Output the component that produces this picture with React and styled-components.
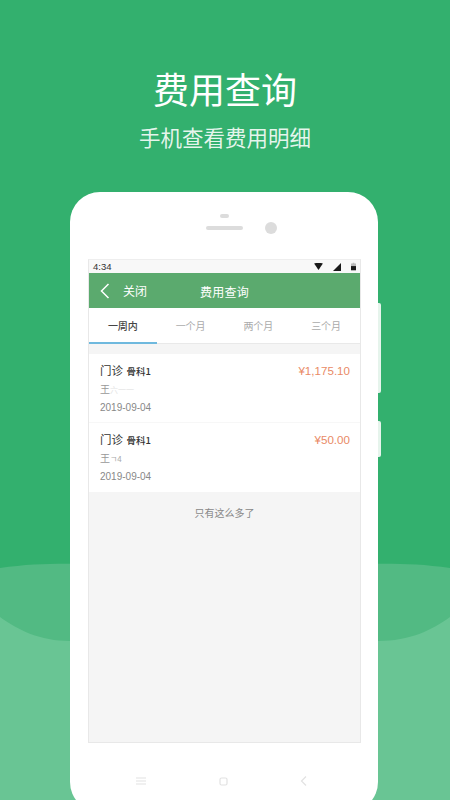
import React from "react";
import styled, { createGlobalStyle } from "styled-components";

const GlobalStyle = createGlobalStyle`
  html, body {
    margin: 0;
    padding: 0;
    background: #33b06e;
  }
  * {
    box-sizing: border-box;
  }
`;

const TABS = ["一周内", "一个月", "两个月", "三个月"];

const RECORDS = [
  { id: 1, amount: "¥1,175.10", name: "王", rest: "六一一", faint: true, date: "2019-09-04" },
  { id: 2, amount: "¥50.00", name: "王", rest: "ㄱ4", faint: false, date: "2019-09-04" },
];

const App = () => {
  return (
    <Page>
      <GlobalStyle />
      <Waves viewBox="0 0 450 240" preserveAspectRatio="none">
        <path
          d="M0 8 C 40 2 70 4 110 4 L340 4 C 380 4 410 2 450 8 L450 240 L0 240 Z"
          fill="#52ba83"
        />
        <path
          d="M0 57 C 18 70 40 81 70 81 L378 81 C 410 81 432 70 450 57 L450 240 L0 240 Z"
          fill="#69c594"
        />
      </Waves>
      <Title>费用查询</Title>
      <Subtitle>手机查看费用明细</Subtitle>
      <Phone>
        <SideKey $top={111} $height={90} />
        <SideKey $top={229} $height={36} />
        <Earpiece>
          <Sensor />
          <SpeakerRow>
            <Speaker />
            <Camera />
          </SpeakerRow>
        </Earpiece>
        <Screen>
          <StatusBar>
            <span>4:34</span>
            <StatusIcons>
              <svg width="9" height="7" viewBox="0 0 10 8">
                <path d="M0 0.5 Q5 -1 10 0.5 L5 8 Z" fill="#1a1a1a" />
              </svg>
              <svg width="8" height="8" viewBox="0 0 8 8">
                <path d="M8 0 L8 8 L0 8 Z" fill="#1a1a1a" />
              </svg>
              <svg width="5" height="9" viewBox="0 0 6 9">
                <path d="M2 0 H4 V1 H6 V9 H0 V1 H2 Z" fill="#bbb" />
                <path d="M0 4 H6 V9 H0 Z" fill="#1a1a1a" />
              </svg>
            </StatusIcons>
          </StatusBar>
          <AppBar>
            <BackLink>
              <svg width="10" height="16" viewBox="0 0 10 16" fill="none">
                <path d="M8.5 1 L1.5 8 L8.5 15" stroke="#fff" strokeWidth="1.5" />
              </svg>
              <span>关闭</span>
            </BackLink>
            <AppTitle>费用查询</AppTitle>
          </AppBar>
          <Tabs>
            {TABS.map((tab, i) => (
              <Tab key={tab} $active={i === 0}>
                {tab}
              </Tab>
            ))}
          </Tabs>
          <Records>
            {RECORDS.map((record) => (
              <Record key={record.id}>
                <RecordHead>
                  <RecordType>
                    门诊 <small>骨科1</small>
                  </RecordType>
                  <Amount>{record.amount}</Amount>
                </RecordHead>
                <Patient>
                  {record.name}
                  <PatientMasked $faint={record.faint}>{record.rest}</PatientMasked>
                </Patient>
                <RecordDate>{record.date}</RecordDate>
              </Record>
            ))}
          </Records>
          <EndNote>只有这么多了</EndNote>
        </Screen>
        <NavBar>
          <svg width="10" height="8" viewBox="0 0 10 8" stroke="#e2e2e2" strokeWidth="1.1">
            <path d="M0 1 H10 M0 4 H10 M0 7 H10" />
          </svg>
          <svg width="9" height="9" viewBox="0 0 9 9" fill="none" stroke="#e2e2e2" strokeWidth="1.2">
            <rect x="1" y="1" width="7" height="7" rx="1.5" />
          </svg>
          <svg width="7" height="10" viewBox="0 0 7 10" fill="none" stroke="#e2e2e2" strokeWidth="1.2">
            <path d="M6 0.5 L1.5 5 L6 9.5" />
          </svg>
        </NavBar>
      </Phone>
    </Page>
  );
};

const FONT = `"Noto Sans CJK SC", "Liberation Sans", sans-serif`;

const Page = styled.div`
  position: relative;
  width: 450px;
  height: 800px;
  overflow: hidden;
  display: flex;
  flex-direction: column;
  align-items: center;
  padding-top: 63px;
  background: #33b06e;
  font-family: ${FONT};
`;

const Waves = styled.svg`
  position: absolute;
  left: 0;
  top: 560px;
  width: 450px;
  height: 240px;
`;

const Title = styled.h1`
  position: relative;
  margin: 0;
  font-size: 36px;
  line-height: 50px;
  font-weight: 400;
  color: #fff;
`;

const Subtitle = styled.p`
  position: relative;
  margin: 9px 0 0;
  font-size: 21.5px;
  line-height: 30px;
  color: rgba(255, 255, 255, 0.88);
`;

const Phone = styled.div`
  position: relative;
  flex: none;
  width: 308px;
  height: 620px;
  margin: 40px 2px 0 0;
  padding: 0 17px 0 18px;
  border-radius: 30px;
  background: #fff;
`;

const SideKey = styled.div`
  position: absolute;
  right: -3px;
  top: ${(p) => p.$top}px;
  width: 3px;
  height: ${(p) => p.$height}px;
  border-radius: 0 2px 2px 0;
  background: #e6f4ec;
`;

const Earpiece = styled.div`
  height: 67px;
  padding-top: 22px;
  display: flex;
  flex-direction: column;
  align-items: center;
`;

const Sensor = styled.div`
  width: 9px;
  height: 4px;
  border-radius: 2px;
  background: #dcdcdc;
`;

const SpeakerRow = styled.div`
  position: relative;
  margin-top: 8px;
`;

const Speaker = styled.div`
  width: 37px;
  height: 4px;
  border-radius: 2px;
  background: #dcdcdc;
`;

const Camera = styled.div`
  position: absolute;
  left: 59px;
  top: -4px;
  width: 12px;
  height: 12px;
  border-radius: 50%;
  background: #dcdcdc;
`;

const Screen = styled.div`
  height: 484px;
  display: flex;
  flex-direction: column;
  border: 1px solid #e8e8e8;
  border-top-color: #eee;
  background: #f5f5f5;
`;

const StatusBar = styled.div`
  flex: none;
  height: 13px;
  padding: 0 4px 0 4px;
  display: flex;
  align-items: center;
  justify-content: space-between;
  background: #f8f8f8;
  font-family: "Liberation Sans", sans-serif;
  font-size: 9.5px;
  color: #333;
`;

const StatusIcons = styled.div`
  display: flex;
  align-items: center;
  gap: 10px;
`;

const AppBar = styled.div`
  position: relative;
  flex: none;
  height: 35px;
  display: flex;
  align-items: center;
  justify-content: center;
  background: #5baa6e;
  color: #fff;
  font-size: 12px;
`;

const BackLink = styled.div`
  position: absolute;
  left: 11px;
  top: 0;
  height: 100%;
  display: flex;
  align-items: center;
  gap: 13px;
`;

const AppTitle = styled.span`
  padding-top: 1px;
  letter-spacing: 0.2px;
`;

const Tabs = styled.div`
  flex: none;
  height: 36px;
  display: grid;
  grid-template-columns: repeat(4, 1fr);
  background: #fff;
  border-bottom: 1px solid #e9e9e9;
`;

const Tab = styled.div`
  display: flex;
  align-items: center;
  justify-content: center;
  margin-bottom: -1px;
  border-bottom: 2px solid ${(p) => (p.$active ? "#6fb9de" : "transparent")};
  font-size: 10px;
  font-weight: ${(p) => (p.$active ? 500 : 400)};
  color: ${(p) => (p.$active ? "#444" : "#aaa")};
`;

const Records = styled.div`
  flex: none;
  margin-top: 10px;
  background: #fff;
`;

const Record = styled.div`
  height: 69px;
  padding: 7px 10px 0 11px;
  &:not(:last-child) {
    border-bottom: 1px solid #f7f7f7;
  }
`;

const RecordHead = styled.div`
  display: flex;
  justify-content: space-between;
  align-items: center;
  height: 18px;
`;

const RecordType = styled.div`
  font-size: 11.5px;
  color: #333;

  small {
    margin-left: 1px;
    font-size: 9.5px;
    font-weight: 500;
  }
`;

const Amount = styled.div`
  font-family: "Liberation Sans", sans-serif;
  font-size: 11.6px;
  color: #e98a66;
`;

const Patient = styled.div`
  margin-top: 1px;
  height: 17px;
  line-height: 17px;
  font-size: 10px;
  color: #999;
`;

const PatientMasked = styled.span`
  color: ${(p) => (p.$faint ? "#e4e4e4" : "#aaa")};
  font-size: 8px;
`;

const RecordDate = styled.div`
  margin-top: 3px;
  font-family: "Liberation Sans", sans-serif;
  font-size: 10px;
  line-height: 16px;
  color: #888;
`;

const EndNote = styled.div`
  padding-top: 12px;
  text-align: center;
  font-size: 10px;
  line-height: 18px;
  color: #888;
`;

const NavBar = styled.div`
  height: 76px;
  padding: 0 54px 0 48px;
  display: flex;
  align-items: center;
  justify-content: space-between;
`;

export default App;
